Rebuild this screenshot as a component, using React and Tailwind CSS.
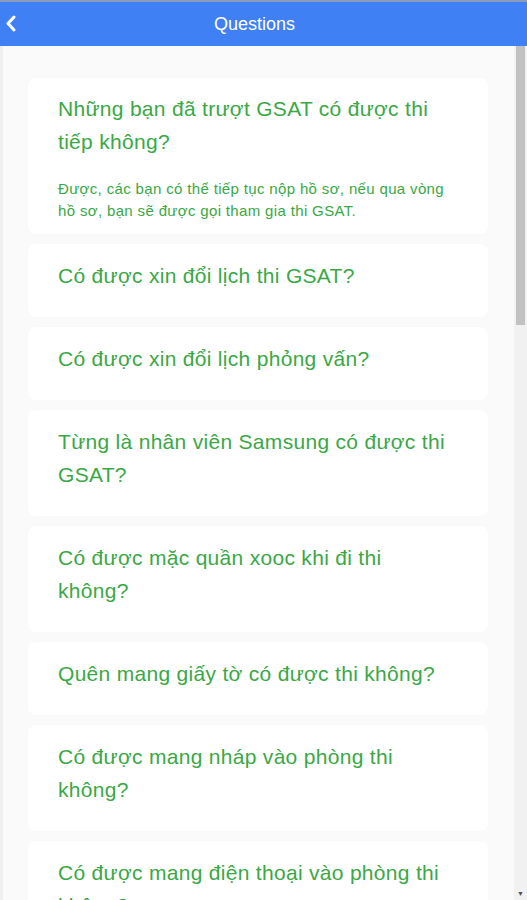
const questions = [
  {
    q: 'Những bạn đã trượt GSAT có được thi tiếp không?',
    a: 'Được, các bạn có thể tiếp tục nộp hồ sơ, nếu qua vòng hồ sơ, bạn sẽ được gọi tham gia thi GSAT.',
  },
  { q: 'Có được xin đổi lịch thi GSAT?' },
  { q: 'Có được xin đổi lịch phỏng vấn?' },
  { q: 'Từng là nhân viên Samsung có được thi GSAT?' },
  { q: 'Có được mặc quần xooc khi đi thi không?' },
  { q: 'Quên mang giấy tờ có được thi không?' },
  { q: 'Có được mang nháp vào phòng thi không?' },
  { q: 'Có được mang điện thoại vào phòng thi không?' },
]

export default function App() {
  return (
    <div className="h-[900px] w-[527px] overflow-hidden flex flex-col bg-[#fafafa]" style={{ fontFamily: '"Liberation Sans", Arial, sans-serif' }}>

      <header className="h-[46px] shrink-0 bg-[#3f80f5] border-t-2 border-[#8a9bbd] relative flex items-center justify-center pr-[18px]">
        <svg className="absolute left-[5px] top-[13px]" width="11" height="17" viewBox="0 0 11 17" fill="none">
          <path d="M9 2 L3 8.5 L9 15" stroke="white" strokeWidth="3" strokeLinecap="round" strokeLinejoin="round" />
        </svg>
        <h1 className="text-white text-[18px] leading-none">Questions</h1>
      </header>

      <div className="flex-1 flex min-h-0">
        <main className="flex-1 overflow-hidden pl-[25px] pr-[26px] pt-[32px] flex flex-col gap-[10px] border-l-[3px] border-[#efefef]">
          {questions.map((item, i) => (
            <div key={i} className="bg-white rounded-lg shadow-[0_0_2px_rgba(0,0,0,0.02)] pl-[30px] pr-[40px] pt-[14px] pb-[12px] shrink-0">
              <p className={`text-[#3aa845] text-[21px] leading-[33px] tracking-[0.3px] ${item.a ? '' : 'mt-[1px] mb-[13px]'}`}>{item.q}</p>
              {item.a && (
                <p className="text-[#3aa845] text-[15px] leading-[22px] tracking-[0.35px] mt-[20px] -mr-[10px]">{item.a}</p>
              )}
            </div>
          ))}
        </main>

        <div className="w-[13px] shrink-0 bg-[#f1f1f1] flex flex-col">
          <div className="h-[279px] mx-[2px] bg-[#c1c1c1]"></div>
          <div className="flex-1"></div>
          <div className="h-[12px] flex items-center justify-center text-[7px] text-[#505050]">▼</div>
        </div>
      </div>
    </div>
  )
}
